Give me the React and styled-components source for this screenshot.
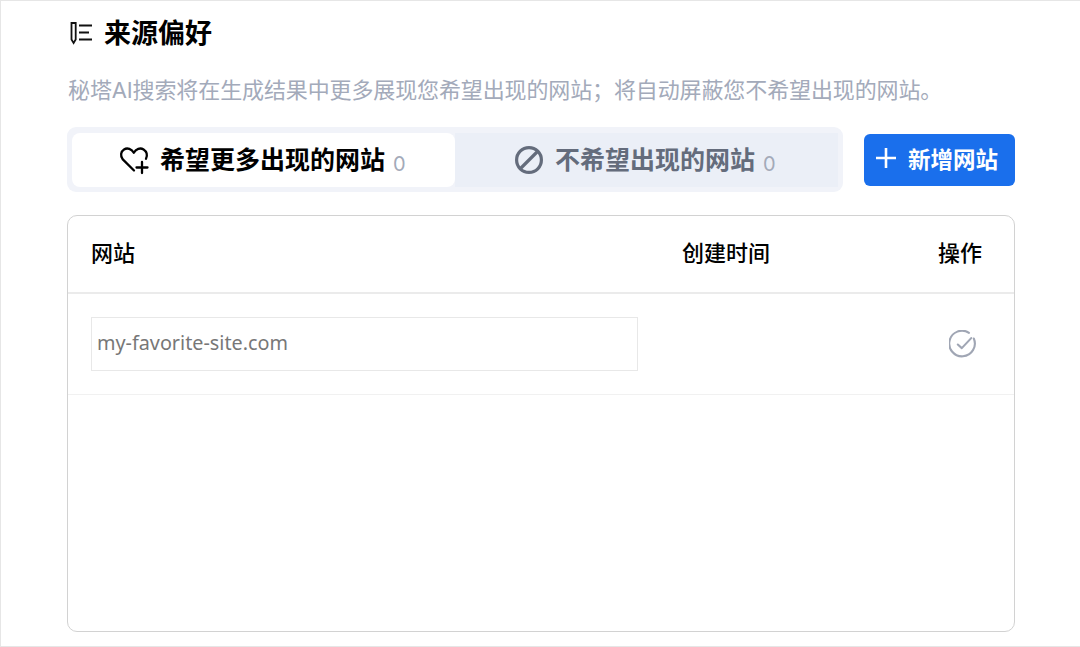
import React from 'react';
import styled, { createGlobalStyle } from 'styled-components';

const GlobalStyle = createGlobalStyle`
	html, body {
		margin: 0;
		padding: 0;
		background: #fff;
		font-family: "Inter", "Noto Sans CJK SC", sans-serif;
	}
`;

const Page = styled.div`
		box-sizing: border-box;
		width: 1080px;
		height: 647px;
		overflow: hidden;
		padding: 0 65px 14px 66px;
		border: solid #e6e6e6;
		border-width: 1px 0 1px 1px;
		display: flex;
		flex-direction: column;
	`,
	TitleRow = styled.div`
		display: flex;
		align-items: center;
		height: 64px;
		gap: 10px;
		padding-left: 3px;
	`,
	Title = styled.h1`
		margin: 2px 0 0;
		font-size: 27px;
		line-height: 38px;
		font-weight: 700;
		color: #000;
	`,
	Subtitle = styled.p`
		margin: 0;
		height: 62px;
		padding: 10px 0 0 1px;
		box-sizing: border-box;
		font-size: 22px;
		letter-spacing: -0.12px;
		line-height: 30px;
		color: #a3aaba;
		white-space: nowrap;
	`,
	Toolbar = styled.div`
		display: flex;
		align-items: center;
		justify-content: space-between;
		height: 65px;
	`,
	Tabs = styled.div`
		box-sizing: border-box;
		display: flex;
		width: 776px;
		height: 65px;
		padding: 6px 5px 5px;
		border-radius: 9px;
		background: #f1f3f9;
	`,
	Tab = styled.div`
		flex: 1;
		display: flex;
		align-items: center;
		justify-content: center;
		gap: 11px;
		padding-right: ${( { $active } ) => ( $active ? '2px' : '3px' )};
		border-radius: ${( { $active } ) => ( $active ? '8px' : '0' )};
		background: ${( { $active } ) => ( $active ? '#fff' : '#ebeff7' )};
		color: ${( { $active } ) => ( $active ? '#000' : '#646c7c' )};
		font-size: 25px;
		font-weight: 700;
		line-height: 34px;
	`,
	Count = styled.span`
		align-self: flex-end;
		margin: 0 0 9px -3px;
		font-size: 20px;
		line-height: 28px;
		font-weight: 400;
		color: #a3aab9;
	`,
	AddButton = styled.button`
		display: flex;
		align-items: center;
		justify-content: center;
		gap: 11px;
		width: 151px;
		height: 52px;
		padding: 0 6px 4px 0;
		border: 0;
		border-radius: 6px;
		background: #1a6fec;
		color: #fff;
		font-family: inherit;
		font-size: 22.5px;
		font-weight: 700;
	`,
	Table = styled.div`
		flex: 1;
		margin-top: 23px;
		border: 1.5px solid #d2d2d2;
		border-radius: 10px;
		overflow: hidden;
	`,
	Row = styled.div`
		box-sizing: border-box;
		display: grid;
		grid-template-columns: 591px 1fr 44px;
		align-items: center;
		padding: 0 32px 0 23px;
		height: ${( { $head } ) => ( $head ? '78px' : '101px' )};
		border-bottom: ${( { $head } ) => ( $head ? '2px solid #ebebeb' : '1px solid #f1f1f1' )};
	`,
	HeadCell = styled.div`
		margin-top: -2px;
		font-size: 22px;
		line-height: 30px;
		font-weight: 500;
		color: #000;
		white-space: nowrap;
	`,
	SiteInput = styled.input`
		box-sizing: border-box;
		display: block;
		width: 547px;
		height: 54px;
		padding: 0 5px 3px;
		border: 1px solid #e8e8e8;
		outline: 0;
		font-family: "Noto Sans", sans-serif;
		font-size: 19.8px;
		color: #777;
		&::placeholder {
			color: #777;
			opacity: 1;
		}
	`,
	ActionCell = styled.div`
		display: flex;
		justify-content: flex-end;
		padding: 0 5px 0 0;
	`;

const SourceIcon = () => (
	<svg width='24' height='24' viewBox='0 0 24 24' fill='none' stroke='#111' strokeWidth='1.8'>
		<path d='M1.5 2h4.2v16.5L3.6 22 1.5 18.5z' />
		<path d='M9 4.5h13M9 11.5h10M9 18.5h13' strokeWidth='2.2' />
	</svg>
);

const HeartPlusIcon = () => (
	<svg width='30' height='30' viewBox='0 0 30 30' fill='none' stroke='#000' strokeWidth='2.3' strokeLinecap='round' strokeLinejoin='round'>
		<path d='M15 25.5 3.8 14.4C1 11 1.8 6.4 5 4.4 8.4 2.4 12.6 3.8 14.8 7.8 17 3.8 21.2 2.4 24.6 4.4c3.2 2 4.2 6 2.4 9.4' />
		<path d='M23 17v11M17.5 22.5h11' />
	</svg>
);

const BanIcon = () => (
	<svg width='30' height='30' viewBox='0 0 30 30' fill='none' stroke='#646c7c' strokeWidth='3.2'>
		<circle cx='15' cy='15' r='12.4' />
		<path d='M6.5 23.5 23.5 6.5' />
	</svg>
);

const PlusIcon = () => (
	<svg width='22' height='22' viewBox='0 0 22 22' fill='none' stroke='#fff' strokeWidth='2.6'>
		<path d='M11 1v20M1 11h20' />
	</svg>
);

const CheckIcon = () => (
	<svg width='28' height='28' viewBox='0 0 28 28' fill='none' stroke='#a0a6b4' strokeWidth='2.1' strokeLinecap='round' strokeLinejoin='round'>
		<path d='M24.8 8.5A12.8 12.8 0 1 1 20 2.8' />
		<path d='M8.8 14.5l4 3.6 9.4-10' />
	</svg>
);

const App = () => {
	return (
		<Page>
			<GlobalStyle />
			{/* Heading */}
			<TitleRow>
				<SourceIcon />
				<Title>来源偏好</Title>
			</TitleRow>
			<Subtitle>秘塔AI搜索将在生成结果中更多展现您希望出现的网站；将自动屏蔽您不希望出现的网站。</Subtitle>
			{/* Tabs and add button */}
			<Toolbar>
				<Tabs>
					<Tab $active>
						<HeartPlusIcon />
						希望更多出现的网站
						<Count>0</Count>
					</Tab>
					<Tab>
						<BanIcon />
						不希望出现的网站
						<Count>0</Count>
					</Tab>
				</Tabs>
				<AddButton>
					<PlusIcon />
					新增网站
				</AddButton>
			</Toolbar>
			{/* Site table */}
			<Table>
				<Row $head>
					<HeadCell>网站</HeadCell>
					<HeadCell>创建时间</HeadCell>
					<HeadCell>操作</HeadCell>
				</Row>
				<Row>
					<SiteInput placeholder='my-favorite-site.com' />
					<div />
					<ActionCell>
						<CheckIcon />
					</ActionCell>
				</Row>
			</Table>
		</Page>
	);
};

export default App;
